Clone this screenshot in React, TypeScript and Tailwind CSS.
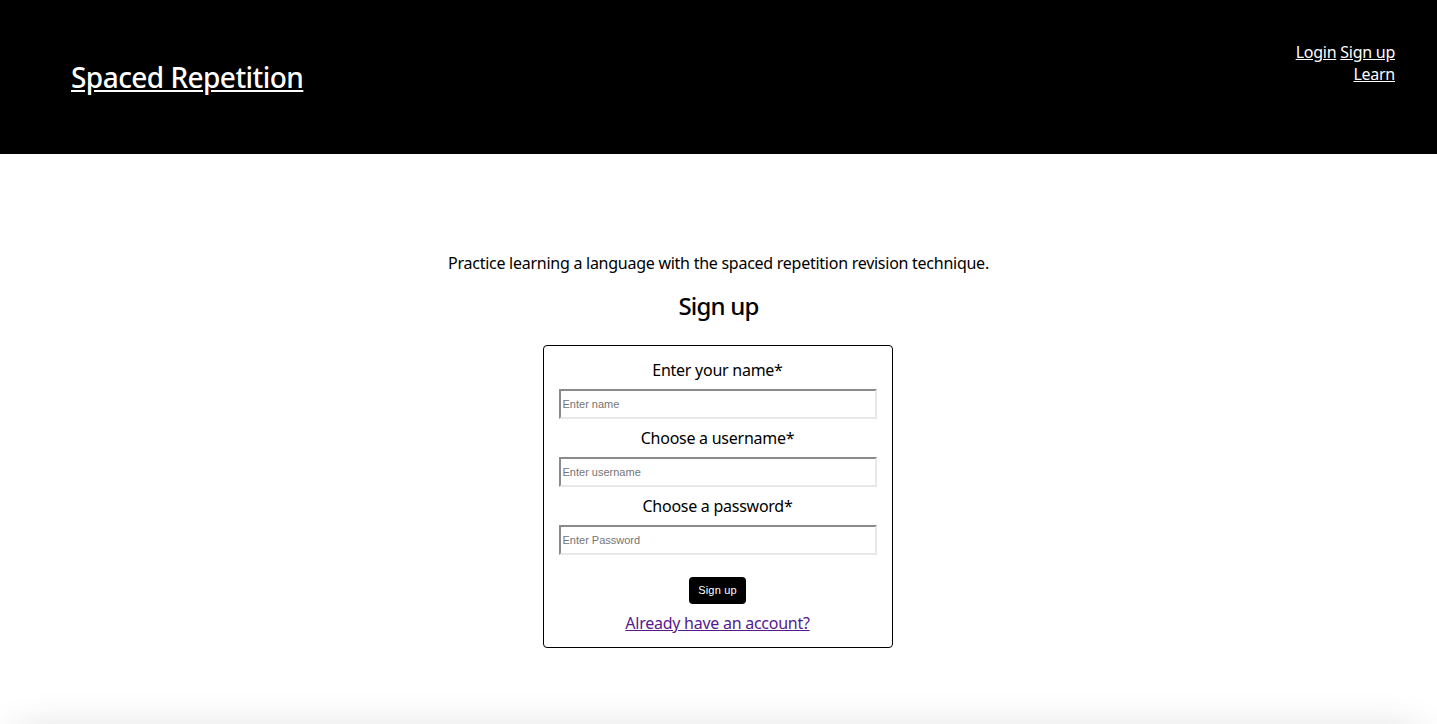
export default function App() {
  return (
    <div className="min-h-screen bg-white font-['Noto_Sans',sans-serif] tracking-[-0.26px] text-black">
      <header className="flex h-[154px] items-center justify-between bg-black pl-[71px] pr-[42px] text-white">
        <a href="#" className="text-[28px] font-medium tracking-[-0.55px] underline">
          Spaced Repetition
        </a>
        <nav className="flex flex-col items-end self-start pt-[41px] text-[16px] leading-[22px]">
          <div className="flex gap-[4px]">
            <a href="#" className="underline">Login</a>
            <a href="#" className="underline">Sign up</a>
          </div>
          <a href="#" className="underline">Learn</a>
        </nav>
      </header>

      <main className="flex flex-col items-center pt-[98px]">
        <p className="text-[16px] leading-[22px]">
          Practice learning a language with the spaced repetition revision technique.
        </p>
        <h2 className="mt-[17px] text-[24px] font-medium leading-[30px] tracking-[-0.8px]">Sign up</h2>

        <form className="mt-[24px] mr-[2px] flex w-[350px] flex-col items-center rounded-[4px] border border-black px-[15px] pt-[13px] pb-[13px]">
          {[
            ["Enter your name*", "Enter name", "text"],
            ["Choose a username*", "Enter username", "text"],
            ["Choose a password*", "Enter Password", "password"],
          ].map(([label, ph, type]) => (
            <div key={label} className="flex w-full flex-col items-center">
              <label className="text-[16px] leading-[22px]">{label}</label>
              <input
                type={type}
                placeholder={ph}
                className="mt-[8px] mb-[8px] h-[30px] w-full border-2 border-t-[#8a8a8a] border-l-[#8a8a8a] border-r-[#e8e8e8] border-b-[#e8e8e8] px-[2px] font-['Liberation_Sans',sans-serif] text-[11px] tracking-normal placeholder:text-[#757575]"
              />
            </div>
          ))}
          <button
            type="button"
            className="mt-[14px] h-[27px] rounded-[4px] bg-black px-[9px] font-['Liberation_Sans',sans-serif] text-[11px] tracking-[0.2px] text-white"
          >
            Sign up
          </button>
          <a href="#" className="mt-[8px] text-[16px] leading-[22px] text-[#551a8b] underline">
            Already have an account?
          </a>
        </form>
      </main>

      <div className="mx-[12px] mt-[82px] h-[200px] rounded-[20px] bg-white shadow-[0_0_40px_rgba(0,0,0,0.14)]" />
    </div>
  );
}
